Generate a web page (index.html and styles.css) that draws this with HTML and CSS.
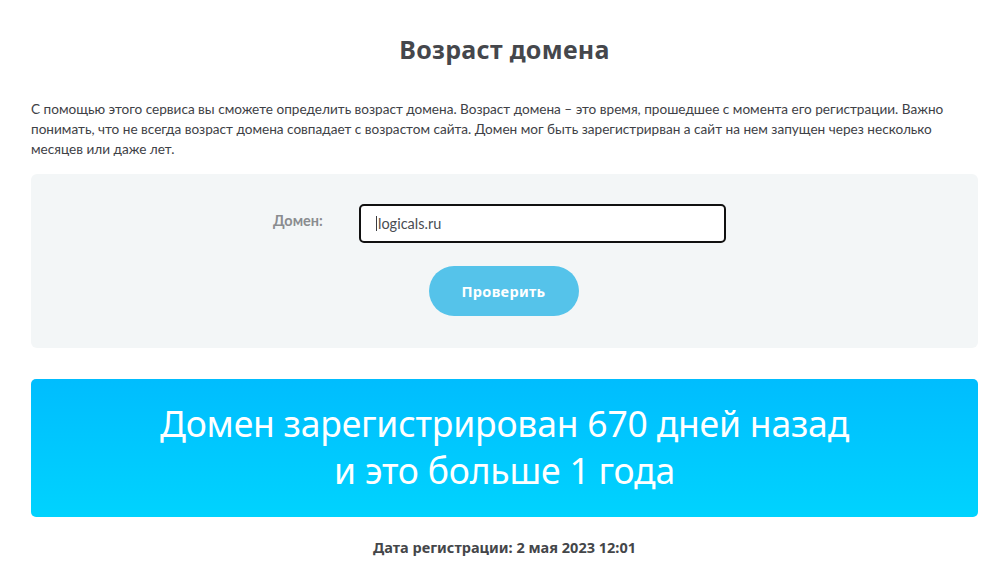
FILE: index.html
```html
<!DOCTYPE html>
<html lang="ru">
<head>
<meta charset="utf-8">
<link rel="stylesheet" href="styles.css">
</head>
<body>
<main class="page">
  <h1 class="title">Возраст домена</h1>
  <p class="intro">С помощью этого сервиса вы сможете определить возраст домена. Возраст домена – это время, прошедшее с момента его регистрации. Важно понимать, что не всегда возраст домена совпадает с возрастом сайта. Домен мог быть зарегистрирван а сайт на нем запущен через несколько месяцев или даже лет.</p>
  <form class="check-form">
    <div class="field-row">
      <label class="field-label" for="domain">Домен:</label>
      <div class="field-input"><span class="caret"></span>logicals.ru</div>
    </div>
    <button type="button" class="check-btn">Проверить</button>
  </form>
  <section class="result">
    <p class="result-text">Домен зарегистрирован 670 дней назад<br>и это больше 1 года</p>
  </section>
  <p class="reg-date">Дата регистрации: 2 мая 2023 12:01</p>
</main>
</body>
</html>
```
FILE: styles.css
```css
html, body {
  margin: 0;
  padding: 0;
  background: #ffffff;
}
body {
  font-family: "Lato", "Open Sans", sans-serif;
  color: #3e4146;
}
.page {
  width: 947px;
  margin-left: 31px;
  display: flex;
  flex-direction: column;
}
.title {
  margin: 34px 0 0;
  text-align: center;
  font-family: "Noto Sans", sans-serif;
  font-weight: 700;
  font-size: 25px;
  line-height: 30px;
  color: #45474c;
  letter-spacing: 0.3px;
}
.intro {
  margin: 35px 0 0;
  font-size: 13.6px;
  line-height: 20px;
  color: #3e4146;
}
.check-form {
  margin-top: 15px;
  background: #f3f6f7;
  border-radius: 6px;
  height: 174px;
  box-sizing: border-box;
  padding-top: 30px;
  display: flex;
  flex-direction: column;
  align-items: center;
}
.field-row {
  display: flex;
  align-items: center;
  margin-left: -10px;
}
.field-label {
  font-size: 14.5px;
  font-weight: 700;
  color: #8a8c8f;
  width: 86px;
  margin-top: -6px;
}
.field-input {
  width: 367px;
  height: 39px;
  box-sizing: border-box;
  border: 2px solid #111;
  border-radius: 5px;
  background: #fff;
  display: flex;
  align-items: center;
  padding-left: 15px;
  font-size: 14.5px;
  color: #4a4d52;
}
.caret {
  width: 1px;
  height: 15px;
  background: #3a3c40;
  margin-right: 1px;
}
.check-btn {
  margin-top: 23px;
  margin-left: -2px;
  width: 150px;
  height: 50px;
  border: none;
  border-radius: 25px;
  background: #55c3ea;
  color: #ffffff;
  font-family: "Noto Sans", sans-serif;
  font-weight: 700;
  font-size: 14.5px;
  letter-spacing: 0.3px;
}
.result {
  margin-top: 31px;
  height: 138px;
  border-radius: 5px;
  background: linear-gradient(180deg, #00bdfe 0%, #00d3fe 100%);
  display: flex;
  align-items: center;
  justify-content: center;
}
.result-text {
  margin: -3px 0 0;
  text-align: center;
  color: #ffffff;
  font-family: "Noto Sans", sans-serif;
  font-weight: 400;
  font-size: 35.5px;
  line-height: 47px;
  letter-spacing: -0.2px;
}
.reg-date {
  margin: 20px 0 0;
  text-align: center;
  font-family: "Noto Sans", sans-serif;
  font-weight: 700;
  font-size: 14.5px;
  color: #444649;
}
```
